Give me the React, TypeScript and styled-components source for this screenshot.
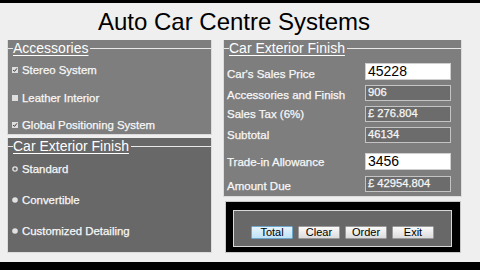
import type { FC } from 'react';
import styled, { createGlobalStyle, css } from 'styled-components';

const GlobalStyle = createGlobalStyle`
  html, body {
    margin: 0;
    padding: 0;
    background: #efefef;
    font-family: 'Liberation Sans', Arial, sans-serif;
  }
`;

const Page = styled.div`
  width: 480px;
  height: 270px;
  overflow: hidden;
  display: flex;
  flex-direction: column;
  background: #efefef;
`;

const TopBar = styled.div`
  height: 3px;
  background: #000;
`;

const Title = styled.h1`
  margin: 5px 0 0;
  padding: 0 12px 4px 0;
  height: 28px;
  font-size: 24px;
  line-height: 28px;
  font-weight: normal;
  text-align: center;
  color: #000;
`;

const Main = styled.div`
  height: 213px;
  display: flex;
  gap: 11px;
  padding: 0 18px 0 7px;
`;

const Column = styled.div<{ $width: number; $gap: number }>`
  width: ${({ $width }) => $width}px;
  display: flex;
  flex-direction: column;
  gap: ${({ $gap }) => $gap}px;
`;

const Panel = styled.div<{ $dark?: boolean; $height?: number }>`
  box-sizing: border-box;
  background: ${({ $dark }) => ($dark ? '#686868' : '#7e7e7e')};
  border: 1px solid #dcdcdc;
  border-top: none;
  ${({ $height }) =>
    $height
      ? css`
          height: ${$height}px;
        `
      : css`
          flex: 1;
        `}
  display: flex;
  flex-direction: column;
`;

const PanelHead = styled.div`
  display: flex;
  align-items: center;
  height: 16px;
`;

const HeadTick = styled.span`
  width: 5px;
  height: 1px;
  background: #e8e8e8;
`;

const HeadText = styled.span`
  font-size: 14px;
  line-height: 16px;
  color: #fff;
  text-decoration: underline;
  text-underline-offset: 2px;
  padding-right: 2px;
`;

const HeadLine = styled.span`
  flex: 1;
  height: 1px;
  background: #e8e8e8;
`;

const OptionList = styled.div<{ $top: number; $pitch: number }>`
  display: flex;
  flex-direction: column;
  padding: ${({ $top }) => $top}px 0 0 4px;
  gap: ${({ $pitch }) => $pitch}px;
`;

// the form's labels read a little heavier than plain Arial
const heavyText = css`
  color: #f7f7f7;
  -webkit-text-stroke: 0.25px #f7f7f7;
`;

const Option = styled.div`
  display: flex;
  align-items: center;
  gap: 4px;
  height: 14px;
  font-size: 11.4px;
  ${heavyText}
`;

const Mark = styled.svg`
  width: 6px;
  height: 6px;
  flex: none;
`;

const CheckBox: FC<{ checked?: boolean }> = ({ checked }) => (
  <Mark viewBox="0 0 6 6">
    <rect x="0" y="0" width="6" height="6" fill="#dedede" />
    {checked && (
      <path d="M1.2 3 L2.5 4.4 L4.9 1.4" stroke="#333" strokeWidth="1" fill="none" />
    )}
  </Mark>
);

const Radio: FC<{ checked?: boolean }> = ({ checked }) => (
  <Mark viewBox="0 0 6 6">
    <circle cx="3" cy="3" r="2.8" fill="#e2e2e2" />
    {checked && <circle cx="3" cy="3" r="1.5" fill="#6a6a6a" />}
  </Mark>
);

const Fields = styled.div`
  display: flex;
  flex-direction: column;
  gap: 5px;
  padding: 7px 10px 0 3px;
`;

const FieldRow = styled.div<{ $extra?: number }>`
  display: flex;
  align-items: center;
  justify-content: space-between;
  margin-top: ${({ $extra }) => $extra ?? 0}px;
`;

const FieldLabel = styled.span<{ $drop?: number }>`
  font-size: 11.5px;
  ${heavyText}
  padding-top: ${({ $drop }) => $drop ?? 0}px;
`;

const InputBox = styled.div`
  box-sizing: border-box;
  width: 86px;
  height: 17px;
  background: #fff;
  border: 1px solid #cfcfcf;
  color: #000;
  font-size: 14px;
  line-height: 15px;
  padding-left: 2px;
`;

const ValueBox = styled.div`
  box-sizing: border-box;
  width: 86px;
  height: 16px;
  background: #6c6c6c;
  border: 1px solid #c4c4c4;
  font-size: 11.2px;
  line-height: 12px;
  padding-left: 2px;
  ${heavyText}
`;

const ButtonPanel = styled.div`
  flex: 1;
  margin: 0 1px 0 2px;
  background: #000;
  border: 1px solid #c8c8c8;
  padding: 8px 8px 5px 7px;
  display: flex;
`;

const ButtonTray = styled.div`
  flex: 1;
  background: #686868;
  border: 1px solid #d8d8d8;
  display: flex;
  justify-content: center;
  align-items: flex-start;
  gap: 5px;
  padding-top: 15px;
`;

const Button = styled.button<{ $focused?: boolean }>`
  box-sizing: border-box;
  width: 42px;
  height: 13px;
  padding: 0;
  font-family: 'Liberation Sans', Arial, sans-serif;
  font-size: 11px;
  line-height: 11px;
  color: #000;
  border: 1px solid ${({ $focused }) => ($focused ? '#6fa6cc' : '#9a9a9a')};
  border-radius: 1px;
  background: ${({ $focused }) =>
    $focused
      ? 'linear-gradient(#e6f4fc, #bfe2f6)'
      : 'linear-gradient(#fafafa, #dcdcdc)'};
`;

const BottomGap = styled.div`
  height: 9px;
`;

const BottomBar = styled.div`
  flex: 1;
  background: #000;
`;

const PanelHeader: FC<{ text: string }> = ({ text }) => (
  <PanelHead>
    <HeadTick />
    <HeadText>{text}</HeadText>
    <HeadLine />
  </PanelHead>
);

const accessories = [
  { label: 'Stereo System', checked: true },
  { label: 'Leather Interior', checked: false },
  { label: 'Global Positioning System', checked: true },
];

const finishes = [
  { label: 'Standard', checked: true },
  { label: 'Convertible', checked: false },
  { label: 'Customized Detailing', checked: false },
];

const App: FC = () => (
  <Page>
    <GlobalStyle />
    <TopBar />
    <Title>Auto Car Centre Systems</Title>
    <Main>
      <Column $width={205} $gap={3}>
        <Panel $height={95}>
          <PanelHeader text="Accessories" />
          <OptionList $top={7} $pitch={13.5}>
            {accessories.map((a) => (
              <Option key={a.label}>
                <CheckBox checked={a.checked} />
                {a.label}
              </Option>
            ))}
          </OptionList>
        </Panel>
        <Panel $dark>
          <PanelHeader text="Car Exterior Finish" />
          <OptionList $top={8} $pitch={17}>
            {finishes.map((f) => (
              <Option key={f.label}>
                <Radio checked={f.checked} />
                {f.label}
              </Option>
            ))}
          </OptionList>
        </Panel>
      </Column>
      <Column $width={239} $gap={4}>
        <Panel $height={157}>
          <PanelHeader text="Car Exterior Finish" />
          <Fields>
            <FieldRow>
              <FieldLabel $drop={4}>Car's Sales Price</FieldLabel>
              <InputBox>45228</InputBox>
            </FieldRow>
            <FieldRow>
              <FieldLabel $drop={4}>Accessories and Finish</FieldLabel>
              <ValueBox>906</ValueBox>
            </FieldRow>
            <FieldRow>
              <FieldLabel $drop={-2}>Sales Tax (6%)</FieldLabel>
              <ValueBox>£ 276.804</ValueBox>
            </FieldRow>
            <FieldRow>
              <FieldLabel>Subtotal</FieldLabel>
              <ValueBox>46134</ValueBox>
            </FieldRow>
            <FieldRow $extra={5}>
              <FieldLabel>Trade-in Allowance</FieldLabel>
              <InputBox>3456</InputBox>
            </FieldRow>
            <FieldRow>
              <FieldLabel $drop={5}>Amount Due</FieldLabel>
              <ValueBox>£ 42954.804</ValueBox>
            </FieldRow>
          </Fields>
        </Panel>
        <ButtonPanel>
          <ButtonTray>
            <Button $focused>Total</Button>
            <Button>Clear</Button>
            <Button>Order</Button>
            <Button>Exit</Button>
          </ButtonTray>
        </ButtonPanel>
      </Column>
    </Main>
    <BottomGap />
    <BottomBar />
  </Page>
);

export default App;
